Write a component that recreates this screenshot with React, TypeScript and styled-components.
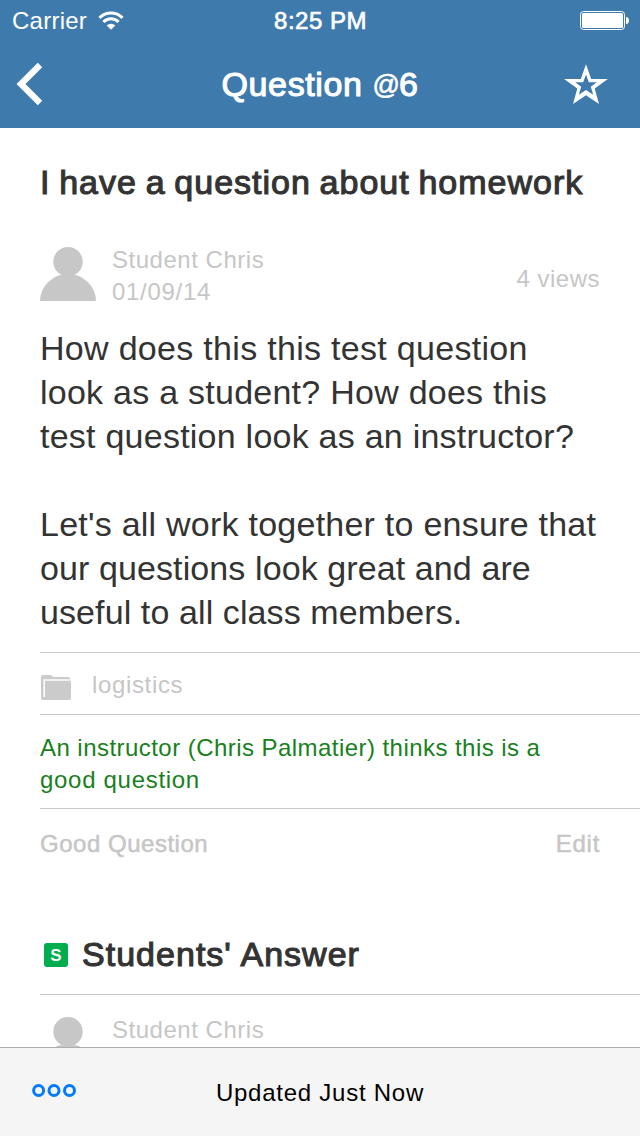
import React from "react";
import styled, { createGlobalStyle } from "styled-components";

const GlobalStyle = createGlobalStyle`
  * { box-sizing: border-box; }
  body { margin: 0; background: #fff; font-family: "Liberation Sans", Arial, sans-serif; }
`;

const Screen = styled.div`
  width: 640px;
  height: 1136px;
  display: flex;
  flex-direction: column;
  overflow: hidden;
  background: #fff;
`;

const Header = styled.header`
  height: 128px;
  flex: none;
  background: #3f7aad;
  color: #fff;
`;

const StatusBar = styled.div`
  height: 40px;
  display: grid;
  grid-template-columns: 1fr auto 1fr;
  align-items: center;
  padding: 1px 11px 0 12px;
`;

const Carrier = styled.div`
  display: flex;
  align-items: center;
  gap: 11px;
`;

const Battery = styled.svg`
  justify-self: end;
`;

const NavBar = styled.div`
  height: 88px;
  display: grid;
  grid-template-columns: 60px 1fr 60px;
  align-items: center;
  padding: 0 16px;
`;

const Star = styled.svg`
  justify-self: start;
`;

const Text = styled.span<{ $size?: number; $track?: number; $word?: number; $stroke?: number; $color?: string }>`
  font-size: ${(p) => p.$size ?? 24}px;
  line-height: ${(p) => ((p.$size ?? 24) > 30 ? 44 : 32)}px;
  letter-spacing: ${(p) => p.$track ?? 0}px;
  word-spacing: ${(p) => p.$word ?? 0}px;
  -webkit-text-stroke: ${(p) => p.$stroke ?? 0}px currentColor;
  color: ${(p) => p.$color ?? "inherit"};
  white-space: nowrap;
`;

const Title = styled(Text)`
  text-align: center;
  padding-bottom: 1px;
`;

const AtSign = styled.span`
  font-size: 27px;
  letter-spacing: -1px;
  vertical-align: 2px;
  line-height: 1;
  -webkit-text-stroke-width: 0.6px;
`;

const Content = styled.main`
  flex: 1;
  min-height: 0;
  overflow: hidden;
  padding-left: 40px;
`;

const Heading = styled.div`
  height: 116px;
  padding-top: 32px;
`;

const Author = styled.div`
  display: flex;
  height: 82px;
  padding-right: 40px;
`;

const Avatar = styled.svg`
  width: 56px;
  height: 54px;
  flex: none;
  margin: 3px 16px 0 0;
`;

const Lines = styled.div`
  display: flex;
  flex-direction: column;
  align-items: flex-start;
  flex: 1;
`;

const Views = styled.div`
  padding-top: 19px;
`;

const Body = styled(Lines)`
  height: 326px;
`;

const BlankLine = styled.div`
  height: 44px;
`;

const Row = styled.div<{ $height: number; $top: number }>`
  height: ${(p) => p.$height}px;
  padding: ${(p) => p.$top}px 40px 0 0;
  border-top: 1px solid #c8c8c8;
  display: flex;
  align-items: flex-start;
`;

const Folder = styled.svg`
  width: 32px;
  height: 26px;
  margin: 5px 20px 0 0;
`;

const Spacer = styled.div`
  flex: 1;
`;

const SectionTitle = styled.div`
  height: 82px;
  display: flex;
  align-items: flex-start;
  padding: 20px 0 0 4px;
  gap: 14px;
`;

const Badge = styled.div`
  width: 24px;
  height: 24px;
  margin-top: 11px;
  border-radius: 3px;
  background: #00ad4e;
  color: #fff;
  font-size: 17px;
  font-weight: bold;
  line-height: 25px;
  text-align: center;
`;

const Footer = styled.footer`
  height: 89px;
  flex: none;
  border-top: 1px solid #aeaeae;
  background: #f5f5f5;
  display: grid;
  grid-template-columns: 120px 1fr 120px;
  align-items: start;
  padding: 29px 32px 0;
  color: #000;
  text-align: center;
`;

const More = styled.svg`
  width: 46px;
  height: 16px;
  margin-top: 6px;
`;

const grey = "#c6c6c6";
const dark = "#333";

const question: { text: string; track: number }[] = [
  { text: "How does this this test question", track: 0.3 },
  { text: "look as a student? How does this", track: 0.25 },
  { text: "test question look as an instructor?", track: 0.24 },
  { text: "", track: 0 },
  { text: "Let's all work together to ensure that", track: 0.24 },
  { text: "our questions look great and are", track: 0.1 },
  { text: "useful to all class members.", track: 0.1 },
];

const Person = () => (
  <Avatar viewBox="0 0 56 54">
    <path d="M0 54A28 27 0 0 1 56 54z" fill="#c7c7c7" />
    <circle cx="28" cy="14.700" r="14.700" fill="#c7c7c7" />
  </Avatar>
);

export default function App() {
  return (
    <Screen>
      <GlobalStyle />
      <Header>
        <StatusBar>
          <Carrier>
            <Text $track={0.25}>Carrier</Text>
            <svg width="26" height="20" viewBox="0 0 26 20" fill="none" stroke="#fff" strokeWidth="3">
              <path d="M1.500 6.900a16.200 16.200 0 0 1 23 0M5.400 11a10.700 10.700 0 0 1 15.200 0" />
              <path d="M13 18.700l-4.300-4.300a6.100 6.100 0 0 1 8.600 0z" fill="#fff" stroke="none" />
            </svg>
          </Carrier>
          <Text $track={0.5} $stroke={0.7}>8:25 PM</Text>
          <Battery width="49" height="19" viewBox="0 0 49 19">
            <rect x=".5" y=".5" width="44" height="18" rx="3" fill="none" stroke="#fff" />
            <rect x="2" y="2" width="41" height="15" rx="1.5" fill="#fff" />
            <path d="M46 6c4 0 4 7 0 7z" fill="#fff" />
          </Battery>
        </StatusBar>
        <NavBar>
          <svg width="28" height="44" viewBox="0 0 28 44" fill="none" stroke="#fff" strokeWidth="6.3">
            <path d="M24 3L5 22l19 19" />
          </svg>
          <Title $size={34} $track={0.6} $stroke={1.1}>
            Question <AtSign>@</AtSign>6
          </Title>
          <Star width="44" height="40" viewBox="0 0 44 40" fill="#fff">
            <path
              fillRule="evenodd"
              d="M22 .3L27.200 15H43.900L30.700 24.500L35 40L22 31.300L9 40L13.300 24.500L.1 15H16.800zM22 10.500L19.200 18.300H11.200L17.200 22.800L14.800 30.700L22 25.900L29.200 30.700L26.800 22.800L32.800 18.300H24.800z"
            />
          </Star>
        </NavBar>
      </Header>
      <Content>
        <Heading>
          <Text $size={34} $track={1} $word={-1.7} $stroke={1.1} $color={dark}>I have a question about homework</Text>
        </Heading>
        <Author>
          <Person />
          <Lines>
            <Text $track={0.52} $color={grey}>Student Chris</Text>
            <Text $track={0.7} $color={grey}>01/09/14</Text>
          </Lines>
          <Views><Text $track={0.5} $color={grey}>4 views</Text></Views>
        </Author>
        <Body>
          {question.map((line, i) =>
            line.text ? (
              <Text key={i} $size={34} $track={line.track} $color={dark}>{line.text}</Text>
            ) : (
              <BlankLine key={i} />
            )
          )}
        </Body>
        <Row $height={62} $top={16}>
          <Folder viewBox="0 0 32 26">
            <path d="M1 3q0-2 2-2h7.500q1.500 0 2.500 2h15q2 0 2 2v2q1 0 1 1.500v15.500q0 2-2 2H3q-2 0-2-2z" fill="#cbcbcb" />
            <path d="M4.200 23V6H29.500" fill="none" stroke="#fff" strokeWidth="1.500" />
          </Folder>
          <Text $track={0.65} $color={grey}>logistics</Text>
        </Row>
        <Row $height={94} $top={17}>
          <Lines>
            <Text $track={0.45} $color="#18801c">An instructor (Chris Palmatier) thinks this is a</Text>
            <Text $track={0.7} $color="#18801c">good question</Text>
          </Lines>
        </Row>
        <Row $height={104} $top={19}>
          <Text $track={0.52} $stroke={0.5} $color={grey}>Good Question</Text>
          <Spacer />
          <Text $track={0.7} $stroke={0.5} $color={grey}>Edit</Text>
        </Row>
        <SectionTitle>
          <Badge>S</Badge>
          <Text $size={34} $track={1.02} $stroke={1.1} $color={dark}>Students' Answer</Text>
        </SectionTitle>
        <Row $height={90} $top={19}>
          <Person />
          <Lines>
            <Text $track={0.52} $color={grey}>Student Chris</Text>
          </Lines>
        </Row>
      </Content>
      <Footer>
        <More viewBox="0 0 46 16" fill="none" stroke="#007aff" strokeWidth="3">
          <circle cx="6.600" cy="7.500" r="5" />
          <circle cx="22" cy="7.500" r="5" />
          <circle cx="37.500" cy="7.500" r="5" />
        </More>
        <Text $track={0.75}>Updated Just Now</Text>
      </Footer>
    </Screen>
  );
}
